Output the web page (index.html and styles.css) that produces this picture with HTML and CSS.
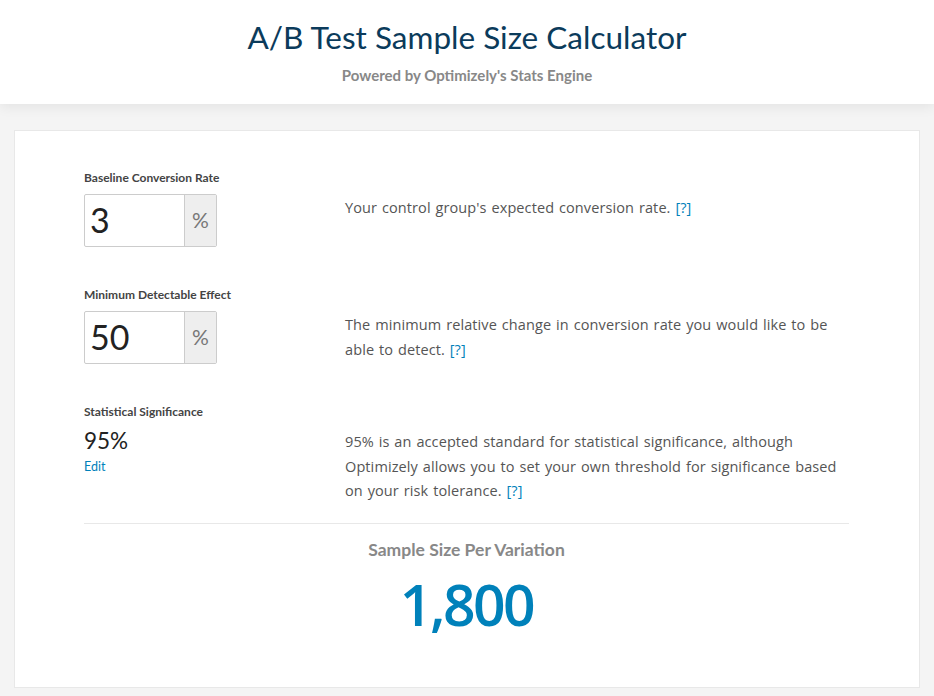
FILE: index.html
```html
<!DOCTYPE html>
<html>
<head>
<meta charset="utf-8">
<link rel="stylesheet" href="styles.css">
</head>
<body>
<header class="header">
  <h1 class="title">A/B Test Sample Size Calculator</h1>
  <p class="subtitle">Powered by Optimizely's Stats Engine</p>
</header>
<main class="card">
  <section class="row">
    <div class="field">
      <label class="label">Baseline Conversion Rate</label>
      <div class="input-group">
        <div class="input">3</div>
        <div class="addon">%</div>
      </div>
    </div>
    <p class="desc">Your control group's expected conversion rate. <a class="help">[?]</a></p>
  </section>
  <section class="row">
    <div class="field">
      <label class="label">Minimum Detectable Effect</label>
      <div class="input-group">
        <div class="input">50</div>
        <div class="addon">%</div>
      </div>
    </div>
    <p class="desc">The minimum relative change in conversion rate you would like to be able to detect. <a class="help">[?]</a></p>
  </section>
  <section class="row row-last">
    <div class="field">
      <label class="label">Statistical Significance</label>
      <div class="sig">95%</div>
      <a class="edit">Edit</a>
    </div>
    <p class="desc">95% is an accepted standard for statistical significance, although Optimizely allows you to set your own threshold for significance based on your risk tolerance. <a class="help">[?]</a></p>
  </section>
  <section class="result">
    <div class="result-label">Sample Size Per Variation</div>
    <div class="result-value">1,800</div>
  </section>
</main>
</body>
</html>
```

FILE: styles.css
```css
html, body {
  margin: 0;
  padding: 0;
}
body {
  background: #f4f4f4;
  font-family: "Open Sans", "Liberation Sans", sans-serif;
  color: #555;
  height: 696px;
  overflow: hidden;
}
.header {
  background: #fff;
  height: 104px;
  box-shadow: 0 3px 12px rgba(0,0,0,0.07);
  text-align: center;
  padding-top: 18px;
  box-sizing: border-box;
  position: relative;
  z-index: 1;
}
.title {
  margin: 0;
  font-family: "Lato", sans-serif;
  font-weight: 400;
  font-size: 31.5px;
  line-height: 38px;
  color: #0b3b5b;
}
.subtitle {
  margin: 10px 0 0;
  font-family: "Lato", sans-serif;
  font-size: 15px;
  font-weight: 700;
  color: #888;
}
.card {
  margin: 26px 14px 0;
  background: #fff;
  border: 1px solid #e8e8e8;
  height: 558px;
  box-sizing: border-box;
  padding: 40px 70px 0 69px;
}
.row {
  display: flex;
  margin-bottom: 41px;
}
.row-last {
  margin-bottom: 0;
}
.field {
  width: 261px;
  flex: none;
}
.label {
  display: block;
  font-family: "Lato", sans-serif;
  font-size: 12px;
  font-weight: 700;
  color: #444;
  line-height: 14px;
  margin-bottom: 9px;
}
.input-group {
  display: flex;
  width: 133px;
  height: 53px;
  box-sizing: border-box;
  border: 1px solid #ccc;
  border-radius: 2px;
}
.input {
  width: 99px;
  font-family: "Lato", sans-serif;
  font-size: 34px;
  line-height: 49px;
  padding-left: 5px;
  color: #222;
  box-sizing: border-box;
}
.addon {
  flex: 1;
  background: #eee;
  border-left: 1px solid #ccc;
  text-align: center;
  font-family: "Lato", sans-serif;
  font-size: 21px;
  line-height: 50px;
  color: #777;
}
.desc {
  margin: 25px 0 0;
  width: 515px;
  font-size: 14.5px;
  letter-spacing: 0.1px;
  word-spacing: 1px;
  line-height: 24.5px;
  color: #555;
}
.help, .edit {
  color: #0081ba;
  text-decoration: none;
}
.sig {
  font-family: "Lato", sans-serif;
  font-size: 22.5px;
  color: #222;
  line-height: 26px;
  margin-top: 5px;
}
.edit {
  display: block;
  font-family: "Lato", sans-serif;
  font-size: 12.5px;
  line-height: 16px;
  margin-top: 5px;
}
.result {
  border-top: 1px solid #e8e8e8;
  margin-top: 19px;
  text-align: center;
  padding-top: 16px;
}
.result-label {
  font-family: "Lato", sans-serif;
  font-size: 17.5px;
  font-weight: 700;
  color: #888;
  line-height: 20px;
}
.result-value {
  font-size: 57px;
  font-weight: 600;
  color: #0081ba;
  line-height: 60px;
  margin-top: 14px;
  letter-spacing: -2.5px;
}
```
